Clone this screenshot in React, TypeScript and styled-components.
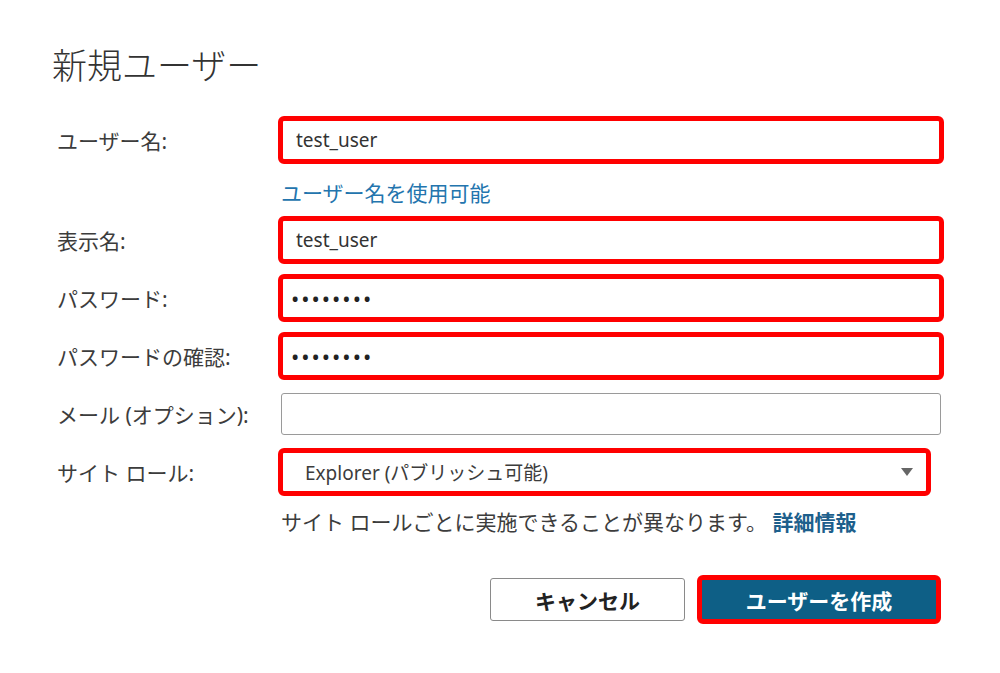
import styled, { createGlobalStyle, css } from "styled-components";

const GlobalStyle = createGlobalStyle`
  body {
    margin: 0;
    background: #ffffff;
    font-family: "Noto Sans", "Noto Sans CJK JP", sans-serif;
    color: #333333;
  }
`;

const Page = styled.div`
  padding: 41px 0 0 52px;
  width: 1000px;
  height: 673px;
  box-sizing: border-box;
`;

const Title = styled.h1`
  margin: 0;
  font-size: 35px;
  line-height: 50px;
  font-weight: 300;
  color: #333333;
`;

const Form = styled.form`
  display: grid;
  grid-template-columns: 224px 660px;
  row-gap: 16px;
  margin: 28px 0 0 5px;
`;

const Label = styled.label`
  display: flex;
  align-items: center;
  font-size: 21px;
  color: #3c3c3c;
  height: 42px;
`;

const highlight = css`
  outline: 5px solid #ff0000;
  outline-offset: -2px;
`;

const Input = styled.input<{ $highlighted?: boolean }>`
  box-sizing: border-box;
  width: 660px;
  height: 42px;
  padding: 0 14px;
  border: 1px solid #9a9a9a;
  border-radius: 3px;
  font-family: inherit;
  font-size: 19px;
  color: #333333;
  background: #ffffff;
  ${({ $highlighted }) => $highlighted && highlight}

  &[type="password"] {
    padding-left: 9px;
    font-size: 22px;
    letter-spacing: 2px;
    color: #222222;
  }
`;

const Select = styled.div<{ $highlighted?: boolean }>`
  box-sizing: border-box;
  width: 647px;
  height: 42px;
  display: flex;
  align-items: center;
  justify-content: space-between;
  padding: 0 14px 0 23px;
  border: 1px solid #9a9a9a;
  border-radius: 3px;
  font-size: 19px;
  color: #3c3c3c;
  ${({ $highlighted }) => $highlighted && highlight}
`;

const Caret = styled.span`
  width: 0;
  height: 0;
  border-left: 6px solid transparent;
  border-right: 6px solid transparent;
  border-top: 8px solid #666666;
`;

const Note = styled.div<{ $offset?: number }>`
  grid-column: 2;
  font-size: 21px;
  line-height: 26px;
  color: #3c3c3c;
  padding-top: ${({ $offset }) => $offset ?? 0}px;
  margin-bottom: ${({ $offset }) => -($offset ?? 0)}px;
`;

const Link = styled.a<{ $bold?: boolean }>`
  color: ${({ $bold }) => ($bold ? "#1d5f8c" : "#2375ae")};
  font-weight: ${({ $bold }) => ($bold ? 700 : 400)};
  text-decoration: none;
`;

const Actions = styled.div`
  grid-column: 1 / -1;
  display: flex;
  justify-content: flex-end;
  gap: 15px;
  margin-top: 27px;
  padding-right: 3px;
`;

const Button = styled.button<{ $primary?: boolean; $highlighted?: boolean }>`
  box-sizing: border-box;
  height: 43px;
  width: ${({ $primary }) => ($primary ? "238px" : "195px")};
  border: 1px solid ${({ $primary }) => ($primary ? "#0e5f86" : "#8a8a8a")};
  border-radius: 3px;
  background: ${({ $primary }) => ($primary ? "#0e5f86" : "#ffffff")};
  color: ${({ $primary }) => ($primary ? "#ffffff" : "#222222")};
  font-family: inherit;
  font-size: 21px;
  font-weight: 700;
  ${({ $highlighted }) => $highlighted && highlight}
`;

const Spacer = styled.div``;

export default function App() {
  return (
    <>
      <GlobalStyle />
      <Page>
        <Title>新規ユーザー</Title>
        <Form onSubmit={(e) => e.preventDefault()}>
          <Label>ユーザー名:</Label>
          <Input $highlighted readOnly value="test_user" />

          <Spacer />
          <Note $offset={3}>
            <Link>ユーザー名を使用可能</Link>
          </Note>

          <Label>表示名:</Label>
          <Input $highlighted readOnly value="test_user" />

          <Label>パスワード:</Label>
          <Input $highlighted readOnly type="password" value="12345678" />

          <Label>パスワードの確認:</Label>
          <Input $highlighted readOnly type="password" value="12345678" />

          <Label>メール (オプション):</Label>
          <Input readOnly value="" />

          <Label>サイト ロール:</Label>
          <Select $highlighted>
            <span>Explorer (パブリッシュ可能)</span>
            <Caret />
          </Select>

          <Note>
            サイト ロールごとに実施できることが異なります。 <Link $bold>詳細情報</Link>
          </Note>

          <Actions>
            <Button type="button">キャンセル</Button>
            <Button type="button" $primary $highlighted>
              ユーザーを作成
            </Button>
          </Actions>
        </Form>
      </Page>
    </>
  );
}
